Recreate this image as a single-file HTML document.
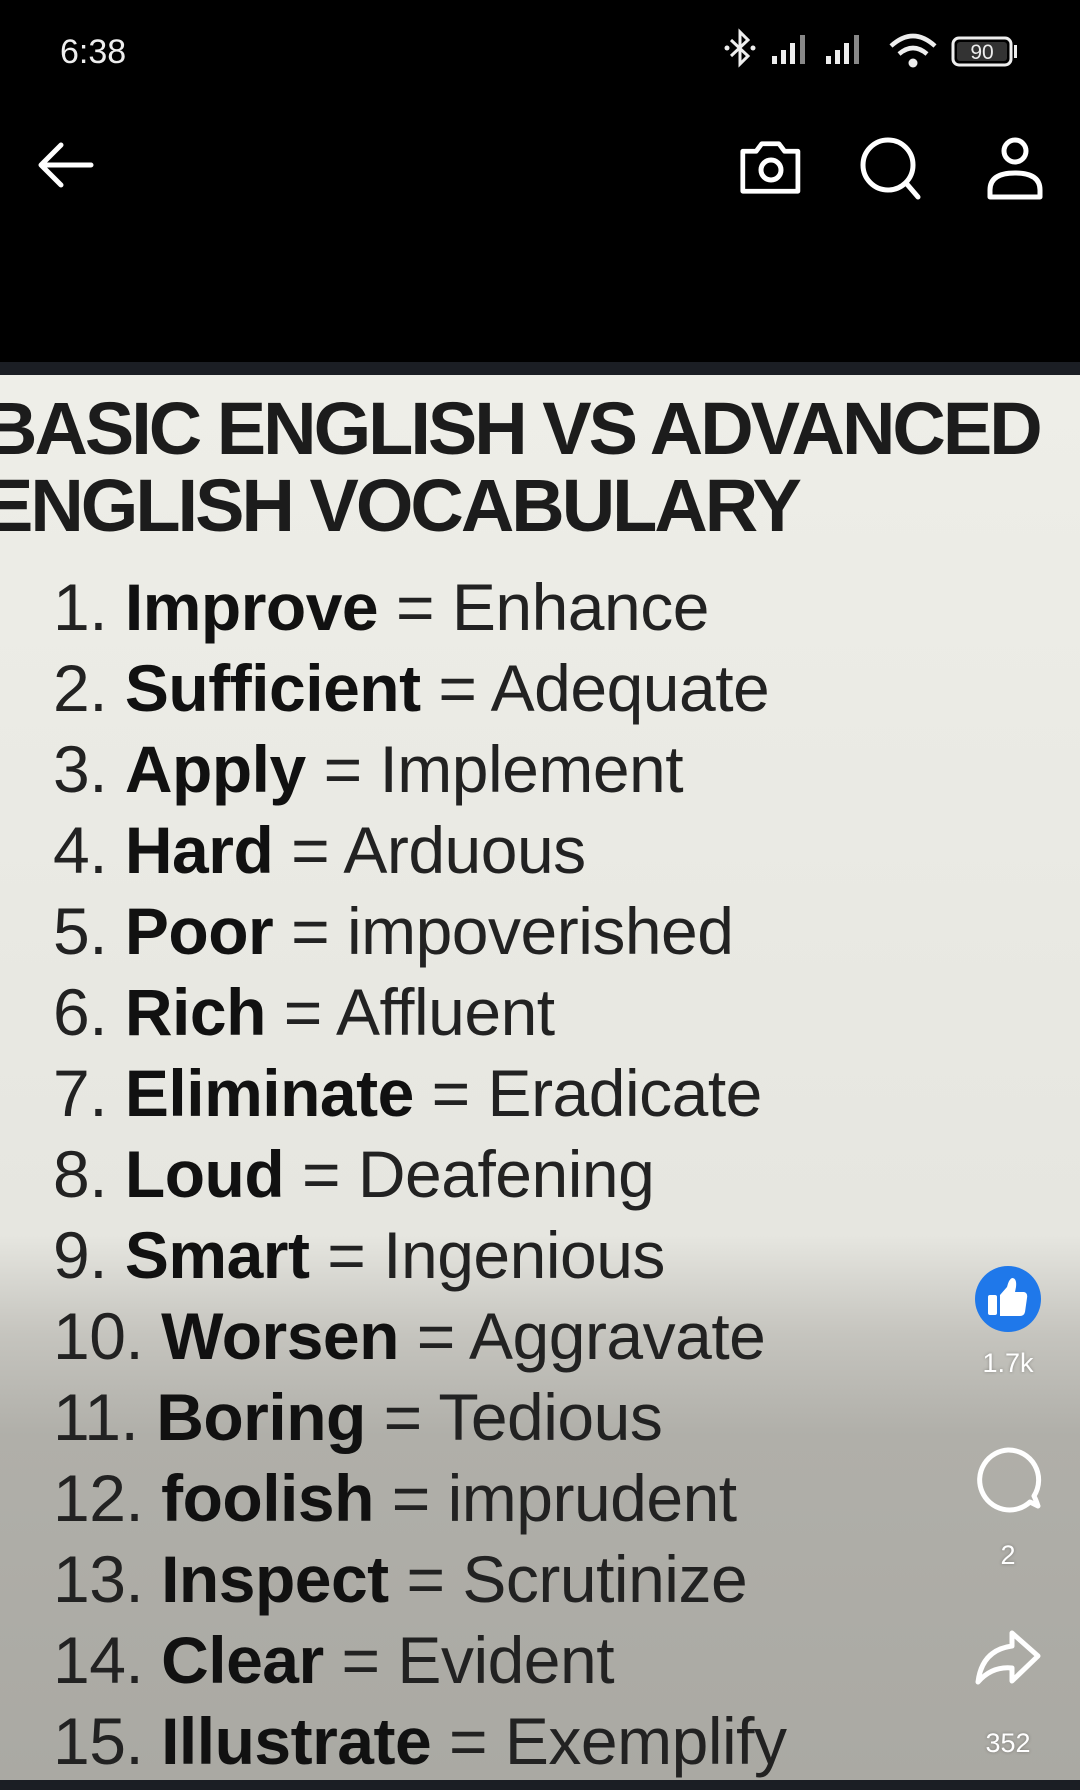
<!DOCTYPE html>
<html><head><meta charset="utf-8"><style>
html,body{margin:0;padding:0}
body{width:1080px;height:1790px;position:relative;overflow:hidden;background:#000;font-family:"Liberation Sans",sans-serif}
.abs{position:absolute}
#img{left:0;top:375px;width:1080px;height:1405px;background:linear-gradient(to bottom,#eeeee8 0,#e6e6e0 860px,#c5c4be 960px,#b0afa9 1060px,#aaa9a3 1405px);overflow:hidden}
.title{position:absolute;left:-16px;font-weight:bold;font-size:74px;color:#1c1c1c;letter-spacing:-3px;white-space:nowrap;line-height:1}
.li{position:absolute;left:53px;font-size:66px;color:#222;white-space:nowrap;line-height:1;letter-spacing:-0.5px}
.li b{color:#111}
.cnt{position:absolute;width:120px;left:948px;text-align:center;color:#fff;font-size:27px;text-shadow:0 0 3px rgba(0,0,0,.3)}
</style></head><body>
<div class="abs" style="left:0;top:362px;width:1080px;height:13px;background:#1b1e24"></div>
<div class="abs" style="left:60px;top:33px;color:#eee;font-size:34px">6:38</div>
<svg class="abs" style="left:0;top:0" width="1080" height="90" viewBox="0 0 1080 90">
<g fill="none" stroke="#eee" stroke-width="3"><path d="M731 40 L748 56 L740 64 L740 32 L748 40 L731 56"/></g>
<circle cx="727" cy="48" r="2.5" fill="#eee"/><circle cx="753" cy="48" r="2.5" fill="#eee"/>
<g fill="#eee"><rect x="772" y="56" width="5" height="8"/><rect x="781" y="50" width="5" height="14"/><rect x="790" y="43" width="5" height="21"/><rect x="800" y="35" width="5" height="29" fill="#888"/>
<rect x="826" y="56" width="5" height="8"/><rect x="835" y="50" width="5" height="14"/><rect x="844" y="43" width="5" height="21"/><rect x="854" y="35" width="5" height="29" fill="#888"/></g>
<g fill="none" stroke="#eee" stroke-width="4.5"><path d="M891 46 Q913 26 935 46"/><path d="M899 54 Q913 42 927 54"/></g><circle cx="913" cy="63" r="4.5" fill="#eee"/>
<rect x="953" y="38" width="58" height="27" rx="6" fill="none" stroke="#eee" stroke-width="3"/><rect x="957" y="42" width="50" height="19" rx="3" fill="#333"/>
<text x="982" y="59" fill="#eee" font-size="21" text-anchor="middle" font-family="Liberation Sans">90</text><rect x="1014" y="45" width="3" height="13" fill="#eee"/>
</svg>
<svg class="abs" style="left:36px;top:140px" width="60" height="50" viewBox="0 0 60 50"><g fill="none" stroke="#fff" stroke-width="5" stroke-linecap="round" stroke-linejoin="round"><path d="M5 25 H55 M25 5 L5 25 L25 45"/></g></svg>
<svg class="abs" style="left:738px;top:138px" width="70" height="60" viewBox="0 0 70 60"><g fill="none" stroke="#fff" stroke-width="5" stroke-linejoin="round"><path d="M4 14 H18 L24 6 H42 L48 14 H62 V56 H4 Z" transform="translate(1,0) scale(0.95)"/><circle cx="33" cy="32" r="10"/></g></svg>
<svg class="abs" style="left:858px;top:135px" width="70" height="70" viewBox="0 0 70 70"><g fill="none" stroke="#fff" stroke-width="5" stroke-linecap="round"><circle cx="30" cy="30" r="25"/><path d="M48 48 L60 62"/></g></svg>
<svg class="abs" style="left:985px;top:135px" width="60" height="70" viewBox="0 0 60 70"><g fill="none" stroke="#fff" stroke-width="5"><circle cx="30" cy="16" r="11"/><path d="M5 62 V55 Q5 38 30 38 Q55 38 55 55 V62 Z" stroke-linejoin="round"/></g></svg>
<div id="img" class="abs">
<div class="title" style="top:17px">BASIC ENGLISH VS ADVANCED</div>
<div class="title" style="top:94px">ENGLISH VOCABULARY</div>
<div class="li" style="top:199px">1. <b>Improve</b> = Enhance</div>
<div class="li" style="top:280px">2. <b>Sufficient</b> = Adequate</div>
<div class="li" style="top:361px">3. <b>Apply</b> = Implement</div>
<div class="li" style="top:442px">4. <b>Hard</b> = Arduous</div>
<div class="li" style="top:523px">5. <b>Poor</b> = impoverished</div>
<div class="li" style="top:604px">6. <b>Rich</b> = Affluent</div>
<div class="li" style="top:685px">7. <b>Eliminate</b> = Eradicate</div>
<div class="li" style="top:766px">8. <b>Loud</b> = Deafening</div>
<div class="li" style="top:847px">9. <b>Smart</b> = Ingenious</div>
<div class="li" style="top:928px">10. <b>Worsen</b> = Aggravate</div>
<div class="li" style="top:1009px">11. <b>Boring</b> = Tedious</div>
<div class="li" style="top:1090px">12. <b>foolish</b> = imprudent</div>
<div class="li" style="top:1171px">13. <b>Inspect</b> = Scrutinize</div>
<div class="li" style="top:1252px">14. <b>Clear</b> = Evident</div>
<div class="li" style="top:1333px">15. <b>Illustrate</b> = Exemplify</div>
</div>
<svg class="abs" style="left:974px;top:1265px" width="68" height="68" viewBox="0 0 68 68"><circle cx="34" cy="34" r="33" fill="#1f78ea"/><g fill="#fff"><rect x="14" y="30" width="9" height="20" rx="2"/><path d="M26 30 L33 22 Q35 14 38 13 Q43 13 42 22 L41 27 H50 Q54 28 53 33 L51 47 Q50 51 46 51 H26 Z"/></g></svg>
<div class="cnt" style="top:1348px">1.7k</div>
<svg class="abs" style="left:972px;top:1445px" width="72" height="72" viewBox="0 0 72 72"><path d="M36 5 A30 30 0 1 0 58 57 L66 61 Q64 55 62 51 A30 30 0 0 0 36 5 Z" fill="none" stroke="#fff" stroke-width="5" stroke-linejoin="round"/></svg>
<div class="cnt" style="top:1540px">2</div>
<svg class="abs" style="left:972px;top:1628px" width="72" height="72" viewBox="0 0 72 72"><path d="M40 5 L66 28 L40 53 V40 Q20 38 6 54 Q10 22 40 18 Z" fill="none" stroke="#fff" stroke-width="5" stroke-linejoin="round"/></svg>
<div class="cnt" style="top:1728px">352</div>
<div class="abs" style="left:0;top:1780px;width:1080px;height:10px;background:#1b1e24"></div>
</body></html>
